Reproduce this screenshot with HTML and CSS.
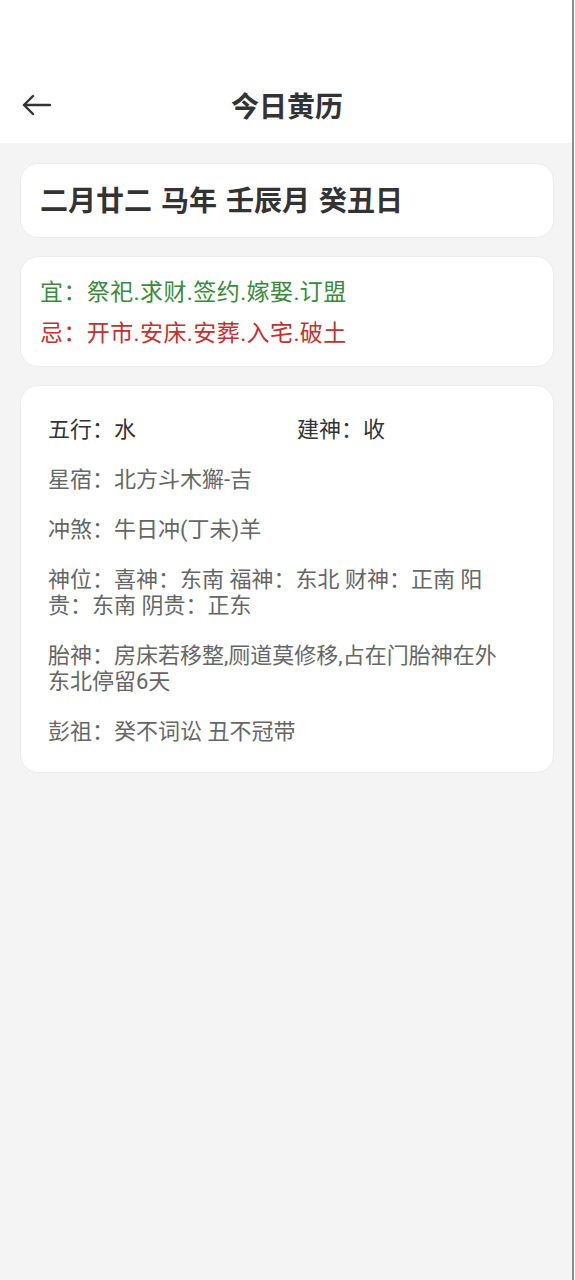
FILE: index.html
```html
<!DOCTYPE html>
<html lang="zh-CN">
<head>
  <meta charset="UTF-8">
  <meta name="viewport" content="width=device-width, initial-scale=1.0">
  <title>今日黄历</title>
  <link rel="stylesheet" href="styles.css">
</head>
<body>
  <div class="page">

    <div class="header">
      <div class="bar">
        <span class="back">
          <svg width="30" height="22" viewBox="0 0 30 22">
            <path d="M29 11 H3 M12 2 L3 11 L12 20" fill="none" stroke="#333" stroke-width="2.4" stroke-linecap="round" stroke-linejoin="round"/>
          </svg>
        </span>
        <h1 class="title">今日黄历</h1>
      </div>
    </div>

    <div class="content">
      <div class="card date-card">二月廿二 马年 壬辰月 癸丑日</div>

      <div class="card yiji">
        <p class="yi">宜：祭祀.求财.签约.嫁娶.订盟</p>
        <p class="ji">忌：开市.安床.安葬.入宅.破土</p>
      </div>

      <div class="card details">
        <div class="row">
          <span class="item main">五行：水</span>
          <span class="item main">建神：收</span>
        </div>
        <p class="item">星宿：北方斗木獬-吉</p>
        <p class="item">冲煞：牛日冲(丁未)羊</p>
        <p class="item">神位：喜神：东南 福神：东北 财神：正南 阳贵：东南 阴贵：正东</p>
        <p class="item">胎神：房床若移整,厕道莫修移,占在门胎神在外东北停留6天</p>
        <p class="item">彭祖：癸不词讼 丑不冠带</p>
      </div>
    </div>

  </div>
</body>
</html>
```

FILE: styles.css
```css
body {
  margin: 0;
  padding: 0;
  background-color: #fff;
  font-family: Roboto, "Noto Sans CJK SC", sans-serif;
  color: #333;
}

.page {
  width: 572px;
  min-height: 1280px;
  background-color: #f4f4f4;
  border-right: 2px solid #8c8c8c;
}

.header {
  height: 143px;
  background-color: #fff;
  display: flex;
  align-items: flex-end;
}

.bar {
  height: 76px;
  width: 100%;
  display: flex;
  align-items: center;
  justify-content: center;
  position: relative;
}

.back {
  position: absolute;
  left: 21px;
  top: 27px;
  display: flex;
}

.title {
  margin: 0;
  font-size: 28px;
  font-weight: bold;
  color: #333;
  padding-left: 2px;
}

.content {
  padding: 20px 18px 0 20px;
  display: flex;
  flex-direction: column;
  gap: 18px;
}

.card {
  background-color: #fff;
  border: 1px solid #ebebeb;
  border-radius: 18px;
}

.date-card {
  padding: 20px 19px 17px;
  font-size: 28px;
  font-weight: bold;
  line-height: 36px;
  word-spacing: 2px;
  color: #333;
}

.yiji {
  padding: 21px 19px 17px;
}

.yiji p {
  margin: 0;
  font-size: 23px;
  line-height: 30px;
  letter-spacing: 0.4px;
}

.yiji p + p {
  margin-top: 11px;
}

.yi {
  color: #3a8a3e;
}

.ji {
  color: #c23030;
}

.details {
  padding: 31px 48px 27px 27px;
}

.row {
  display: grid;
  grid-template-columns: 249px 1fr;
  margin-bottom: 24px;
}

.item {
  margin: 0 0 24px;
  font-size: 22px;
  line-height: 26px;
  color: #666;
}

.row .item {
  margin: 0;
}

.item.main {
  color: #333;
}

.details .item:last-child {
  margin-bottom: 0;
}
```
